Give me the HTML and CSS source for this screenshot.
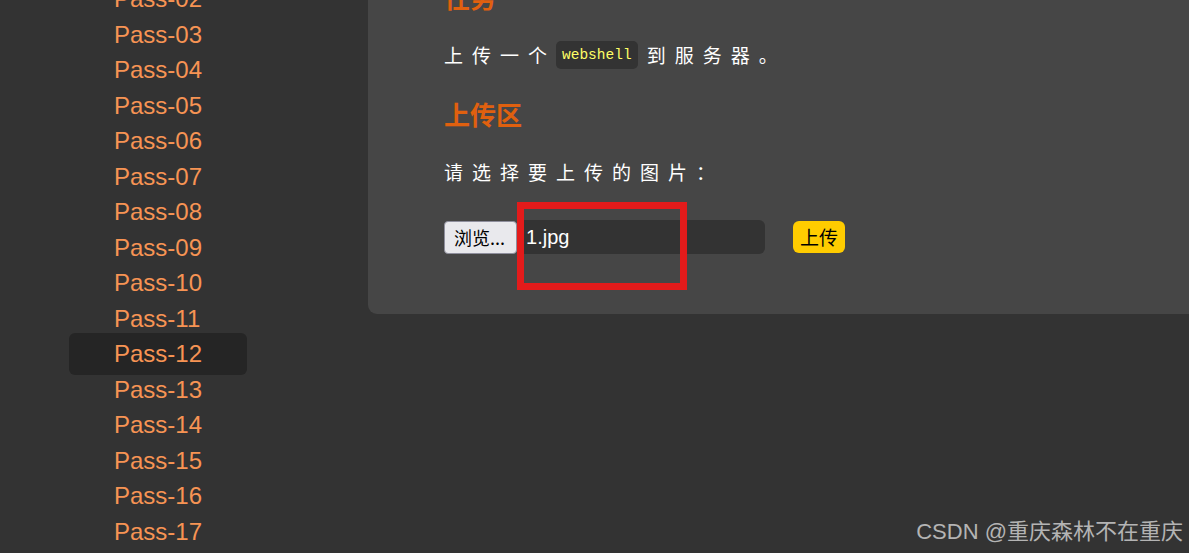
FILE: index.html
```html
<!DOCTYPE html>
<html lang="zh">
<head>
<meta charset="utf-8">
<title>Upload-Labs Pass-12</title>
<link rel="stylesheet" href="styles.css">
</head>
<body>
<div class="page">
  <nav class="sidebar">
    <ul class="menu">
      <li class="item">Pass-02</li>
      <li class="item">Pass-03</li>
      <li class="item">Pass-04</li>
      <li class="item">Pass-05</li>
      <li class="item">Pass-06</li>
      <li class="item">Pass-07</li>
      <li class="item">Pass-08</li>
      <li class="item">Pass-09</li>
      <li class="item">Pass-10</li>
      <li class="item">Pass-11</li>
      <li class="item active">Pass-12</li>
      <li class="item">Pass-13</li>
      <li class="item">Pass-14</li>
      <li class="item">Pass-15</li>
      <li class="item">Pass-16</li>
      <li class="item">Pass-17</li>
    </ul>
  </nav>
  <main class="main">
    <section class="panel">
      <h2 class="title">任务</h2>
      <p class="text">上传一个<code class="code">webshell</code>到服务器。</p>
      <h2 class="title">上传区</h2>
      <p class="text">请选择要上传的图片：</p>
      <div class="form">
        <div class="file">
          <span class="browse">浏览...</span>
          <span class="filename">1.jpg</span>
          <span class="mark"></span>
        </div>
        <button class="submit">上传</button>
      </div>
    </section>
  </main>
</div>
<div class="watermark">CSDN @重庆森林不在重庆</div>
</body>
</html>
```

FILE: styles.css
```css
html, body {
  margin: 0;
  padding: 0;
  background: #333333;
  height: 553px;
  overflow: hidden;
}
body {
  font-family: "Liberation Sans", "Noto Sans CJK SC", sans-serif;
  position: relative;
}
.page {
  display: flex;
  align-items: flex-start;
}
.sidebar {
  width: 368px;
  flex: none;
}
.menu {
  list-style: none;
  margin: -19px 0 0 69px;
  padding: 0;
  width: 178px;
}
.item {
  height: 35.5px;
  line-height: 35.5px;
  padding-left: 45px;
  font-size: 24px;
  color: #f79454;
  border-radius: 6px;
}
.item.active {
  background: #252525;
  height: 42px;
  line-height: 42px;
  margin: -3.25px 0;
}
.main {
  flex: 1;
}
.panel {
  background: #464646;
  border-bottom-left-radius: 9px;
  margin-top: -40px;
  padding: 19px 0 0 76px;
  height: 354px;
  box-sizing: border-box;
}
.title {
  margin: 0;
  font-family: "Noto Sans CJK SC", sans-serif;
  font-weight: bold;
  font-size: 26px;
  line-height: 36px;
  color: #e0600f;
  height: 36px;
}
.text {
  margin: 26px 0 27px;
  font-family: "Noto Sans CJK SC", sans-serif;
  font-size: 19px;
  line-height: 28px;
  letter-spacing: 9px;
  color: #ffffff;
  display: flex;
  align-items: center;
}
.code {
  font-family: "Liberation Mono", monospace;
  font-size: 14.5px;
  letter-spacing: 0;
  color: #ffff66;
  background: #333333;
  border-radius: 5px;
  padding: 0 6px;
  line-height: 28px;
  margin-right: 9px;
}
.form {
  display: flex;
  align-items: center;
  margin-top: 34px;
}
.file {
  display: flex;
  align-items: center;
  position: relative;
}
.browse {
  font-family: "Noto Sans CJK SC", sans-serif;
  font-size: 18px;
  color: #000;
  background: #e9e9ed;
  border: 1px solid #8f8f9d;
  border-radius: 4px;
  height: 31px;
  line-height: 31px;
  padding: 0 11px 0 9px;
  box-sizing: content-box;
}
.filename {
  font-family: "Liberation Sans", sans-serif;
  font-size: 20px;
  color: #fff;
  background: #333333;
  width: 239px;
  height: 34px;
  line-height: 34px;
  padding-left: 9px;
  border-radius: 0 6px 6px 0;
}
.mark {
  position: absolute;
  left: 73px;
  top: -18px;
  width: 156px;
  height: 74px;
  border: 7px solid #e31b1b;
}
.submit {
  margin-left: 28px;
  font-family: "Noto Sans CJK SC", sans-serif;
  font-size: 19px;
  color: #000;
  background: #ffcc00;
  border: none;
  border-radius: 6px;
  height: 32px;
  width: 52px;
  padding: 0;
  line-height: 32px;
}
.watermark {
  position: absolute;
  right: 6px;
  bottom: 8px;
  font-family: "Liberation Sans", "Noto Sans CJK SC", sans-serif;
  font-size: 22px;
  color: #b4b4b4;
  line-height: 26px;
}
```
